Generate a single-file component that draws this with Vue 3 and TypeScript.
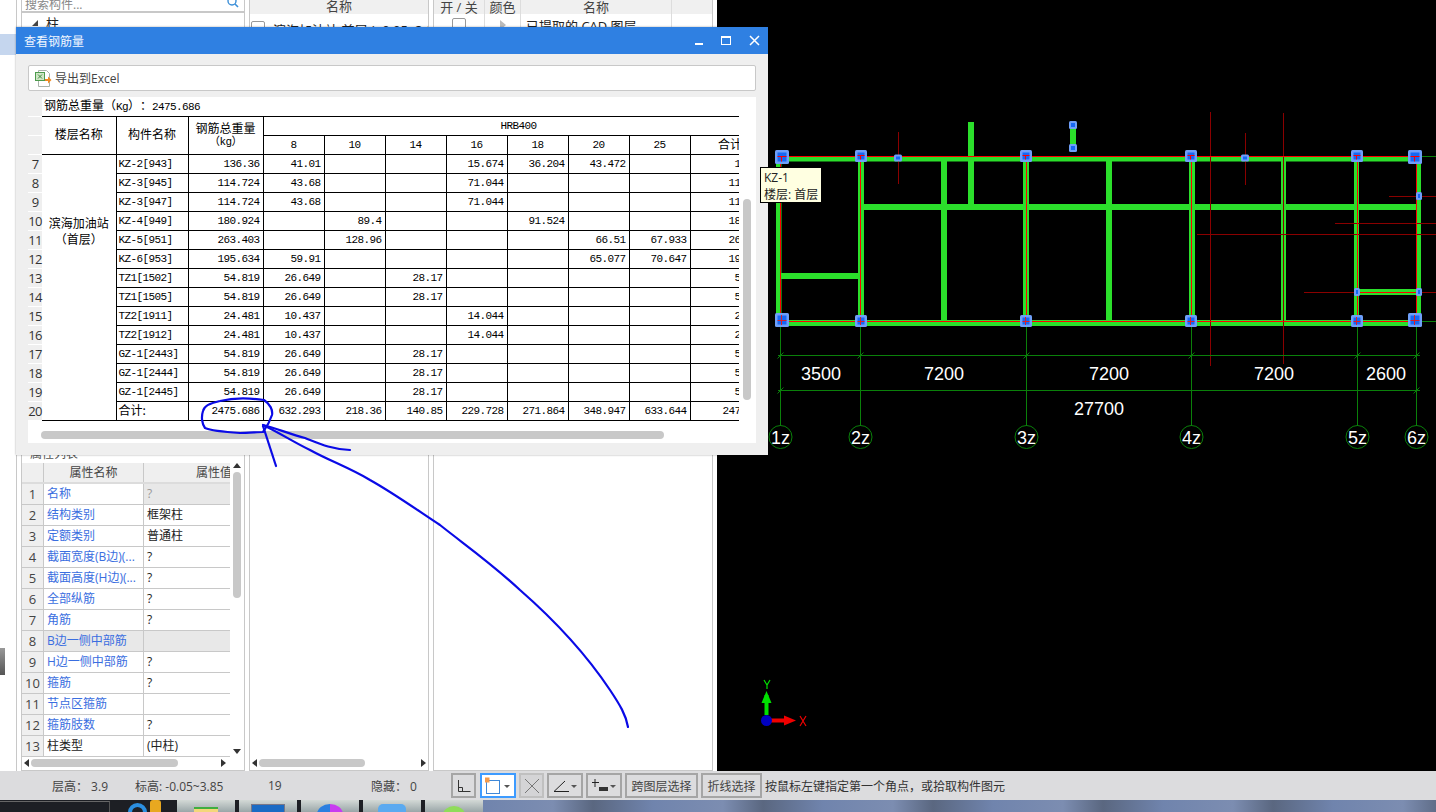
<script setup lang="ts">
interface SteelRow {
  no: number;
  name: string;
  total: string;
  bars: string[];
  sum: string;
}

const diameters = ['8', '10', '14', '16', '18', '20', '25'];

const steelRows: SteelRow[] = [
  { no: 7, name: 'KZ-2[943]', total: '136.36', bars: ['41.01', '', '', '15.674', '36.204', '43.472', ''], sum: '136.36' },
  { no: 8, name: 'KZ-3[945]', total: '114.724', bars: ['43.68', '', '', '71.044', '', '', ''], sum: '114.724' },
  { no: 9, name: 'KZ-3[947]', total: '114.724', bars: ['43.68', '', '', '71.044', '', '', ''], sum: '114.724' },
  { no: 10, name: 'KZ-4[949]', total: '180.924', bars: ['', '89.4', '', '', '91.524', '', ''], sum: '180.924' },
  { no: 11, name: 'KZ-5[951]', total: '263.403', bars: ['', '128.96', '', '', '', '66.51', '67.933'], sum: '263.403' },
  { no: 12, name: 'KZ-6[953]', total: '195.634', bars: ['59.91', '', '', '', '', '65.077', '70.647'], sum: '195.634' },
  { no: 13, name: 'TZ1[1502]', total: '54.819', bars: ['26.649', '', '28.17', '', '', '', ''], sum: '54.819' },
  { no: 14, name: 'TZ1[1505]', total: '54.819', bars: ['26.649', '', '28.17', '', '', '', ''], sum: '54.819' },
  { no: 15, name: 'TZ2[1911]', total: '24.481', bars: ['10.437', '', '', '14.044', '', '', ''], sum: '24.481' },
  { no: 16, name: 'TZ2[1912]', total: '24.481', bars: ['10.437', '', '', '14.044', '', '', ''], sum: '24.481' },
  { no: 17, name: 'GZ-1[2443]', total: '54.819', bars: ['26.649', '', '28.17', '', '', '', ''], sum: '54.819' },
  { no: 18, name: 'GZ-1[2444]', total: '54.819', bars: ['26.649', '', '28.17', '', '', '', ''], sum: '54.819' },
  { no: 19, name: 'GZ-1[2445]', total: '54.819', bars: ['26.649', '', '28.17', '', '', '', ''], sum: '54.819' },
];
const totalBars = ['632.293', '218.36', '140.85', '229.728', '271.864', '348.947', '633.644'];

const props = [
  { name: '名称', value: '?', link: true, muted: true },
  { name: '结构类别', value: '框架柱', link: true },
  { name: '定额类别', value: '普通柱', link: true },
  { name: '截面宽度(B边)(...', value: '?', link: true },
  { name: '截面高度(H边)(...', value: '?', link: true },
  { name: '全部纵筋', value: '?', link: true },
  { name: '角筋', value: '?', link: true },
  { name: 'B边一侧中部筋', value: '', link: true, shaded: true },
  { name: 'H边一侧中部筋', value: '?', link: true },
  { name: '箍筋', value: '?', link: true },
  { name: '节点区箍筋', value: '', link: true },
  { name: '箍筋肢数', value: '?', link: true },
  { name: '柱类型', value: '(中柱)', link: false },
];

// drawing coordinates, viewBox starts at the canvas left edge
const beams = [
  [776, 157, 645, 4.5],
  [776, 320, 645, 6],
  [776, 157, 5.5, 169],
  [858, 161, 6, 160],
  [941, 161, 6, 160],
  [968, 122, 6, 82],
  [1023, 161, 6, 160],
  [1106, 161, 6, 160],
  [1189, 161, 6, 160],
  [1281, 161, 5, 160],
  [1354, 161, 5, 160],
  [1416, 161, 5, 160],
  [864, 204, 552, 6],
  [781, 273, 77, 6],
  [1359, 289, 57, 6],
  [1070, 125, 6, 23],
];

const redLines = [
  [776, 156.5, 1420, 156.5],
  [780.5, 157, 780.5, 320],
  [860.5, 157, 860.5, 320],
  [1026.5, 157, 1026.5, 320],
  [1191.5, 157, 1191.5, 320],
  [1357.5, 157, 1357.5, 320],
  [1416.5, 157, 1416.5, 320],
  [776, 321.5, 1420, 321.5],
  [1359, 292.5, 1416, 292.5],
];

const darkLines = [
  [898.5, 132, 898.5, 184],
  [1245.5, 133, 1245.5, 185],
  [1210.5, 112, 1210.5, 366],
  [1283.5, 113, 1283.5, 364],
  [1389, 196.5, 1436, 196.5],
  [1335, 223.5, 1436, 223.5],
  [1197, 234.5, 1436, 234.5],
  [1304, 292.5, 1436, 292.5],
];

const axisX = [780.5, 860.5, 1026.5, 1191.5, 1357.5, 1416.5];
const axisLabels = ['1z', '2z', '3z', '4z', '5z', '6z'];
const spans = [
  { x: 821, text: '3500' },
  { x: 944, text: '7200' },
  { x: 1109, text: '7200' },
  { x: 1274, text: '7200' },
  { x: 1386, text: '2600' },
];

const nodes = [
  [782, 157, 14], [861, 156, 12], [1026, 156, 12], [1191, 156, 12], [1357, 156, 12], [1415, 157, 14],
  [782, 320, 14], [861, 321, 12], [1026, 321, 12], [1191, 321, 12], [1357, 321, 12], [1415, 320, 14],
];
const smallNodes = [
  [898, 158, 5, 5], [1245, 158, 5, 5], [1419, 196, 3, 6], [1357, 292, 3, 6], [1419, 292, 3, 6],
  [1073, 125, 5, 6], [1073, 148, 5, 6],
];

const tiles = ['ico-folder', 'ico-screen', 'ico-ball', 'ico-pane', 'ico-green'];
</script>

<template>
  <div class="screen">
    <div class="workspace">
      <aside class="rail">
        <div class="rail-selected"></div>
        <div class="rail-thumb"></div>
      </aside>

      <section class="panel panel-props">
        <div class="search">
          <span>搜索构件...</span>
          <svg width="12" height="12" viewBox="0 0 12 12" class="search-icon">
            <circle cx="5" cy="3" r="4" fill="none" stroke="#3b8fd8" stroke-width="1.4" />
            <path d="M8 6l3 3" stroke="#3b8fd8" stroke-width="1.6" />
          </svg>
        </div>
        <div class="tree-row"><i class="tree-arrow"></i>柱</div>
        <div class="prop-title">属性列表</div>
        <div class="prop-box">
          <div class="prop-main">
            <div class="prop-grid">
              <div class="prop-row prop-head">
                <span class="pn"></span><span class="pk">属性名称</span><span class="pv">属性值</span>
              </div>
              <div v-for="(p, i) in props" :key="i" class="prop-row" :class="{ shaded: p.shaded }">
                <span class="pn">{{ i + 1 }}</span>
                <span class="pk" :class="{ link: p.link }">{{ p.name }}</span>
                <span class="pv" :class="{ muted: p.muted }">{{ p.value }}</span>
              </div>
            </div>
            <div class="vbar">
              <i class="arrow-up"></i>
              <div class="vbar-thumb"></div>
              <i class="arrow-down"></i>
            </div>
          </div>
          <div class="hbar hbar-props">
            <i class="arrow-left"></i>
            <div class="hbar-track"><div class="hbar-thumb"></div></div>
            <i class="arrow-right"></i>
          </div>
        </div>
      </section>

      <section class="panel panel-floors">
        <div class="col-head">名称</div>
        <div class="floor-row"><i class="check"></i>滨海加油站 首层 ( -0.05~3.85 )</div>
        <div class="hbar hbar-floors">
          <i class="arrow-left"></i>
          <div class="hbar-track"><div class="hbar-thumb"></div></div>
          <i class="arrow-right"></i>
        </div>
      </section>

      <section class="panel panel-layers">
        <div class="layer-head">
          <span class="lc1">开 / 关</span><span class="lc2">颜色</span><span class="lc3">名称</span>
        </div>
        <div class="layer-row">
          <span class="lc1"><i class="check"></i></span>
          <span class="lc2"><i class="tri"></i></span>
          <span class="lc3 left">已提取的 CAD 图层</span>
        </div>
      </section>

      <div class="canvas">
        <svg width="719" height="771" viewBox="717 0 719 771">
          <rect v-for="(b, i) in beams" :key="'b' + i" :x="b[0]" :y="b[1]" :width="b[2]" :height="b[3]" fill="#2bdf2b" />
          <line v-for="(l, i) in darkLines" :key="'d' + i" :x1="l[0]" :y1="l[1]" :x2="l[2]" :y2="l[3]" stroke="#8a0000" />
          <line v-for="(l, i) in redLines" :key="'r' + i" :x1="l[0]" :y1="l[1]" :x2="l[2]" :y2="l[3]" stroke="#ff0000" />

          <g stroke="#0a800a" fill="none">
            <line x1="1421" y1="156.5" x2="1436" y2="156.5" />
            <line x1="1420" y1="321.5" x2="1436" y2="321.5" />
            <line x1="778" y1="355.5" x2="1420" y2="355.5" />
            <line x1="778" y1="390.5" x2="1420" y2="390.5" />
            <template v-for="(x, i) in axisX" :key="'a' + i">
              <line :x1="x" y1="326" :x2="x" y2="426" />
              <path :d="`M${x - 3} 358.5l6 -6`" />
              <circle :cx="x" cy="437" r="11.5" />
            </template>
            <path d="M777.5 393.5l6 -6M1413.5 393.5l6 -6" />
          </g>

          <g v-for="(n, i) in nodes" :key="'n' + i">
            <rect :x="n[0] - n[2] / 2" :y="n[1] - n[2] / 2" :width="n[2]" :height="n[2]" rx="1.5" fill="#6f9ff8" />
            <rect :x="n[0] - n[2] / 2 + 2.5" :y="n[1] - n[2] / 2 + 2.5" :width="n[2] - 5" :height="n[2] - 5" fill="#1668f5" />
            <path v-if="n[1] < 200" :d="`M${n[0] - n[2] / 2 + 2.5} ${n[1] - 0.5}h${n[2] - 5}M${n[0] - 0.5} ${n[1] - 0.5}v${n[2] / 2 - 2}`" stroke="#ff0000" fill="none" />
            <path v-else :d="`M${n[0] - n[2] / 2 + 2.5} ${n[1] + 0.5}h${n[2] - 5}M${n[0] - 0.5} ${n[1] - n[2] / 2 + 2}v${n[2] - 4}`" stroke="#d8202a" fill="none" />
          </g>
          <g v-for="(n, i) in smallNodes" :key="'s' + i">
            <rect :x="n[0] - n[2] / 2 - 1.5" :y="n[1] - n[3] / 2 - 1" :width="n[2] + 3" :height="n[3] + 2" rx="1.5" fill="#6f9ff8" />
            <rect :x="n[0] - n[2] / 2 + 0.5" :y="n[1] - n[3] / 2 + 1" :width="n[2] - 1" :height="n[3] - 2" fill="#1668f5" />
          </g>

          <g class="cad-text" fill="#fff" text-anchor="middle">
            <text v-for="s in spans" :key="s.x" :x="s.x" y="380">{{ s.text }}</text>
            <text x="1099" y="415">27700</text>
            <text v-for="(t, i) in axisLabels" :key="t" :x="axisX[i]" y="444">{{ t }}</text>
          </g>

          <g>
            <rect x="764.5" y="695" width="4" height="20" fill="#00e000" />
            <path d="M766.5 691l-5 12h10z" fill="#00e000" />
            <rect x="770" y="718.5" width="18" height="4" fill="#f00000" />
            <path d="M796 720.5l-12 -5v10z" fill="#f00000" />
            <circle cx="766.5" cy="720.5" r="5.5" fill="#0000c0" />
            <path d="M764 680l3 5 3 -5M767 685v4" stroke="#00e000" stroke-width="1.2" fill="none" />
            <path d="M800 716l6 10M806 716l-6 10" stroke="#f00000" stroke-width="1.2" fill="none" />
          </g>
        </svg>
      </div>
    </div>

    <footer class="status">
      <span class="st st1">层高： 3.9</span>
      <span class="st st2">标高: -0.05~3.85</span>
      <span class="st st3">19</span>
      <span class="st st4">隐藏： 0</span>
      <div class="tools">
        <button class="tool w24">
          <svg width="16" height="16" viewBox="0 0 16 16"><path d="M2.5 2v11.5h12M2.5 9.5h4v4" fill="none" stroke="#333" /></svg>
        </button>
        <button class="tool w36 on">
          <svg width="20" height="20" viewBox="0 0 20 20">
            <rect x="1.5" y="4.5" width="13" height="13" fill="none" stroke="#3f88d8" />
            <rect x="-0.5" y="1.5" width="5" height="5" fill="#f59a4a" />
          </svg>
          <i class="caret"></i>
        </button>
        <button class="tool w25 dim">
          <svg width="16" height="16" viewBox="0 0 16 16"><path d="M1 1l14 14M15 1L1 15" stroke="#777" fill="none" /></svg>
        </button>
        <button class="tool w36">
          <svg width="18" height="16" viewBox="0 0 18 16"><path d="M1 13.5h15M1 13.5L12 3" stroke="#222" fill="none" /></svg>
          <i class="caret"></i>
        </button>
        <button class="tool w36">
          <svg width="18" height="16" viewBox="0 0 18 16"><path d="M3 1v8M0 4.5h7" stroke="#222" fill="none" /><rect x="7" y="9" width="9" height="4" fill="#333" /></svg>
          <i class="caret"></i>
        </button>
        <button class="tool w73">跨图层选择</button>
        <button class="tool w61">折线选择</button>
      </div>
      <span class="hint">按鼠标左键指定第一个角点，或拾取构件图元</span>
    </footer>

    <div class="taskbar">
      <div class="start-box"></div>
      <i class="orb"></i>
      <i class="shield"></i>
      <div v-for="t in tiles" :key="t" class="tile"><i :class="t"></i></div>
      <div class="wallpaper"></div>
    </div>

    <div class="dialog">
      <header class="dialog-title">
        <span>查看钢筋量</span>
        <div class="win-btns">
          <i class="win-min"></i>
          <i class="win-max"></i>
          <svg width="11" height="11" viewBox="0 0 11 11"><path d="M1 1l9 9M10 1l-9 9" stroke="#fff" stroke-width="1.5" /></svg>
        </div>
      </header>
      <div class="dialog-body">
        <div class="dialog-toolbar">
          <svg width="17" height="17" viewBox="0 0 17 17">
            <path d="M3.5 .5h8l3 3v13h-11z" fill="#fff" stroke="#a9b3aa" />
            <rect x=".5" y="2.5" width="9" height="8" fill="#cfe6c6" stroke="#4d9a4d" />
            <path d="M3 4.5l4 4M7 4.5l-4 4" stroke="#3d8a3d" />
            <path d="M10 9h3V6.5l3.5 3.5-3.5 3.5V11h-3z" fill="#f08a24" />
          </svg>
          <span>导出到Excel</span>
        </div>
        <div class="sheet">
          <div class="sheet-left">
            <div class="sheet-clip">
              <table class="steel">
                <colgroup>
                  <col style="width: 14px" /><col style="width: 74px" /><col style="width: 72px" /><col style="width: 75px" />
                  <col v-for="d in diameters" :key="d" style="width: 61px" />
                  <col style="width: 84px" />
                </colgroup>
                <tbody>
                  <tr>
                    <td class="rn"></td>
                    <td colspan="11" class="sheet-caption"><span class="cn">钢筋总重量（</span>Kg<span class="cn">）：</span>2475.686</td>
                  </tr>
                  <tr>
                    <td class="rn"></td>
                    <td rowspan="2" class="mid no-left"><span class="cn">楼层名称</span></td>
                    <td rowspan="2" class="mid"><span class="cn">构件名称</span></td>
                    <td rowspan="2" class="mid two-line"><span class="cn">钢筋总重量</span><br />（kg）</td>
                    <td colspan="8" class="mid">HRB400</td>
                  </tr>
                  <tr>
                    <td class="rn"></td>
                    <td v-for="d in diameters" :key="d" class="mid">{{ d }}</td>
                    <td class="mid sum-head"><span class="cn">合计</span></td>
                  </tr>
                  <tr v-for="(r, i) in steelRows" :key="r.no">
                    <td class="rn num">{{ r.no }}</td>
                    <td v-if="i === 0" :rowspan="14" class="site no-left"><span class="cn">滨海加油站<br />（首层）</span></td>
                    <td class="name">{{ r.name }}</td>
                    <td class="val">{{ r.total }}</td>
                    <td v-for="(b, j) in r.bars" :key="j" class="val">{{ b }}</td>
                    <td class="val">{{ r.sum }}</td>
                  </tr>
                  <tr>
                    <td class="rn num">20</td>
                    <td class="name"><span class="cn">合计:</span></td>
                    <td class="val">2475.686</td>
                    <td v-for="(b, j) in totalBars" :key="j" class="val">{{ b }}</td>
                    <td class="val">2475.686</td>
                  </tr>
                </tbody>
              </table>
            </div>
            <div class="sheet-hbar"></div>
          </div>
          <div class="sheet-vbar"><div class="sheet-vthumb"></div></div>
        </div>
      </div>
    </div>

    <div class="tip">
      <div>KZ-1</div>
      <div>楼层: 首层</div>
    </div>

    <svg class="ink" width="1436" height="812" viewBox="0 0 1436 812">
      <g fill="none" stroke="#0a0ae6" stroke-width="2.2" stroke-linecap="round" stroke-linejoin="round">
        <path d="M264 400C250 398 232 398 220 401C210 403 204 406 203 411C201 417 202 424 205 428C212 431 225 432 240 433C248 433 258 432 263 432C266 428 270 421 272 415C273 410 270 404 264 400Z" />
        <path d="M263 426L276 466" />
        <path d="M263 425C275 428 290 434 305 438C318 443 330 449 350 450" />
        <path d="M263 425C280 433 295 443 310 450C330 461 350 468 370 480C395 494 420 512 440 525C465 545 490 562 520 590C560 625 590 660 610 690C620 705 626 715 628 727" />
      </g>
    </svg>
  </div>
</template>

<style>
html,
body {
  margin: 0;
  overflow: hidden;
  background: #fff;
}
</style>

<style scoped>
.screen {
  position: relative;
  width: 1436px;
  height: 812px;
  overflow: hidden;
  display: flex;
  flex-direction: column;
  font-family: "Open Sans", "Noto Sans CJK SC", sans-serif;
  font-size: 12px;
  color: #222;
  background: #fff;
}

.workspace {
  height: 771px;
  display: flex;
  flex: none;
}

.rail {
  width: 16px;
  flex: none;
  border-right: 1px solid #c8c8c8;
  padding-top: 34px;
  box-sizing: content-box;
}

.rail-selected {
  height: 21px;
  background: #c5d6ee;
}

.rail-thumb {
  width: 5px;
  height: 27px;
  margin-top: 593px;
  background: linear-gradient(#999, #555);
}

.panel {
  flex: none;
  box-sizing: border-box;
  height: 771px;
  border: 1px solid #c8c8c8;
  border-top: none;
  background: #fff;
  position: relative;
}

.panel-props {
  width: 224px;
  margin-left: 4px;
  margin-right: 4px;
}

.panel-floors {
  width: 180px;
  margin-right: 4px;
  border-bottom: 1px solid #c8c8c8;
}

.panel-layers {
  width: 280px;
  margin-right: 4px;
}

.search {
  height: 11px;
  border-bottom: 2px solid #c8c8c8;
  padding-left: 3px;
  line-height: 9px;
  color: #888;
  font-size: 12px;
  overflow: hidden;
  position: relative;
}

.search-icon {
  position: absolute;
  right: 5px;
  top: -2px;
}

.tree-row {
  height: 20px;
  padding-left: 24px;
  line-height: 20px;
  font-size: 13px;
  display: flex;
  align-items: center;
}

.tree-arrow {
  width: 0;
  height: 0;
  margin-left: -14px;
  margin-right: 8px;
  border-left: 6px solid transparent;
  border-bottom: 6px solid #444;
}

.prop-title {
  position: absolute;
  left: 8px;
  top: 445px;
  height: 18px;
  line-height: 18px;
  color: #555;
}

.prop-box {
  position: absolute;
  left: 0;
  right: 0;
  top: 463px;
  bottom: 0;
}

.prop-main {
  display: flex;
  height: 294px;
}

.prop-grid {
  width: 208px;
  flex: none;
  overflow: hidden;
}

.prop-row {
  display: flex;
  height: 21px;
  box-sizing: border-box;
  border-bottom: 1px solid #c8c8c8;
  line-height: 20px;
}

.prop-head {
  background: #efefef;
  border-bottom: 2px solid #dcdcdc;
  color: #444;
}

.prop-row span {
  display: block;
  box-sizing: border-box;
  white-space: nowrap;
  overflow: hidden;
}

.pn {
  width: 22px;
  flex: none;
  text-align: center;
  background: #efefef;
  border-right: 1px solid #c8c8c8;
  color: #444;
  font-size: 13px;
}

.pk {
  width: 100px;
  flex: none;
  padding-left: 3px;
  border-right: 1px solid #c8c8c8;
}

.pv {
  flex: 1;
  padding-left: 3px;
}

.prop-head .pk {
  text-align: center;
  padding-left: 0;
}

.prop-head .pv {
  padding-left: 52px;
}

.link {
  color: #3a6ee0;
}

.muted {
  color: #999;
  background: #e8e8e8;
}

.shaded .pk,
.shaded .pv {
  background: #e8e8e8;
}

.vbar {
  flex: 1;
  position: relative;
}

.vbar-thumb {
  position: absolute;
  left: 3px;
  top: 9px;
  width: 8px;
  height: 126px;
  border-radius: 4px;
  background: #c8c8c8;
}

.arrow-up,
.arrow-down,
.arrow-left,
.arrow-right {
  position: absolute;
  width: 0;
  height: 0;
}

.arrow-up {
  left: 3px;
  top: 0;
  border-left: 4px solid transparent;
  border-right: 4px solid transparent;
  border-bottom: 5px solid #333;
}

.arrow-down {
  left: 3px;
  bottom: 3px;
  border-left: 4px solid transparent;
  border-right: 4px solid transparent;
  border-top: 5px solid #333;
}

.hbar {
  position: absolute;
  left: 0;
  right: 0;
  height: 14px;
}

.hbar-props {
  top: 293px;
  right: 16px;
}

.hbar-floors {
  bottom: 0;
}

.hbar-track {
  position: absolute;
  left: 9px;
  right: 9px;
  top: 3px;
  height: 8px;
}

.hbar-thumb {
  height: 8px;
  border-radius: 4px;
  background: #c8c8c8;
}

.hbar-props .hbar-thumb {
  width: 147px;
}

.hbar-floors .hbar-thumb {
  width: 106px;
}

.arrow-left {
  left: 2px;
  top: 3px;
  border-top: 4px solid transparent;
  border-bottom: 4px solid transparent;
  border-right: 5px solid #333;
}

.arrow-right {
  right: 2px;
  top: 3px;
  border-top: 4px solid transparent;
  border-bottom: 4px solid transparent;
  border-left: 5px solid #333;
}

.col-head {
  height: 14px;
  line-height: 12px;
  text-align: center;
  background: #f0f0f0;
  font-size: 13px;
  color: #444;
}

.floor-row {
  height: 30px;
  display: flex;
  align-items: center;
  padding-left: 1px;
  font-size: 13px;
  white-space: nowrap;
  overflow: hidden;
}

.floor-row .check {
  margin-right: 8px;
  margin-top: -1px;
}

.check {
  display: block;
  flex: none;
  width: 12px;
  height: 13px;
  border: 1px solid #999;
  border-radius: 2px;
  background: #fff;
}

.layer-head,
.layer-row {
  display: flex;
}

.layer-head {
  height: 14px;
  line-height: 10px;
  background: #f0f0f0;
  color: #444;
  font-size: 13px;
}

.layer-row {
  height: 22px;
  align-items: center;
  font-size: 13px;
}

.layer-head span,
.layer-row span {
  display: flex;
  justify-content: center;
  align-items: center;
  height: 100%;
  box-sizing: border-box;
  border-right: 1px solid #ddd;
  white-space: nowrap;
}

.lc1 {
  width: 51px;
}

.lc2 {
  width: 36px;
}

.lc3 {
  width: 151px;
}

.layer-row .left {
  justify-content: flex-start;
  padding-left: 5px;
}

.tri {
  width: 0;
  height: 0;
  border-top: 5px solid transparent;
  border-bottom: 5px solid transparent;
  border-left: 6px solid #bbb;
}

.canvas {
  width: 719px;
  flex: none;
  background: #000;
  line-height: 0;
}

.cad-text {
  font-family: "Liberation Sans", sans-serif;
  font-size: 18px;
}

.status {
  height: 29px;
  flex: none;
  display: flex;
  align-items: center;
  padding-left: 52px;
  background: #dcdcde;
  color: #444;
}

.st {
  flex: none;
  white-space: nowrap;
}

.st1 {
  width: 83px;
}

.st2 {
  width: 133px;
}

.st3 {
  width: 103px;
}

.st4 {
  width: 80px;
}

.tools {
  display: flex;
  gap: 3px;
  flex: none;
}

.tool {
  height: 25px;
  padding: 0;
  box-sizing: border-box;
  border: 2px solid #a5a5a5;
  background: #dcdcde;
  display: flex;
  align-items: center;
  justify-content: center;
  font: inherit;
  color: #444;
  position: relative;
}

.w24 {
  width: 25px;
  margin-right: 1px;
}

.w25 {
  width: 25px;
}

.w36 {
  width: 36px;
  justify-content: flex-start;
  padding-left: 4px;
}

.w73 {
  width: 73px;
}

.w61 {
  width: 61px;
}

.tool.on {
  border-color: #3d9bff;
  background: #fff;
  padding-left: 3px;
}

.tool.dim {
  border-color: #c0c0c0;
  background: #d4d4d6;
}

.caret {
  position: absolute;
  right: 4px;
  top: 10px;
  width: 0;
  height: 0;
  border-left: 3px solid transparent;
  border-right: 3px solid transparent;
  border-top: 3px solid #555;
}

.hint {
  margin-left: 3px;
  color: #333;
  white-space: nowrap;
}

.taskbar {
  height: 12px;
  flex: none;
  display: flex;
  gap: 0;
  overflow: hidden;
  background: #1d1f24;
}

.start-box {
  width: 110px;
  height: 11px;
  margin-top: 1px;
  border-top: 1px solid #666;
  border-right: 1px solid #555;
  box-sizing: border-box;
  flex: none;
}

.orb {
  width: 19px;
  height: 19px;
  flex: none;
  margin-left: 18px;
  margin-top: 3px;
  border-radius: 50%;
  border: 4px solid #2b8fe0;
  box-sizing: border-box;
}

.shield {
  width: 11px;
  height: 12px;
  flex: none;
  margin-left: 3px;
  margin-right: 16px;
  border-radius: 3px 3px 0 0;
  background: #e8a820;
}

.tile {
  width: 58px;
  flex: none;
  margin-right: 4px;
  display: flex;
  justify-content: center;
  background: linear-gradient(#d3d9d6, #9aa6a8);
  overflow: hidden;
}

.tile i {
  display: block;
  margin-top: 7px;
}

.ico-folder {
  width: 24px;
  height: 8px;
  background: #f4d77a;
  border-top: 2px solid #3fae3f;
}

.ico-screen {
  width: 32px;
  height: 8px;
  margin-top: 4px !important;
  background: #1a6bc4;
  border: 1px solid #778;
}

.ico-ball {
  width: 26px;
  height: 20px;
  margin-top: 4px !important;
  border-radius: 50%;
  background: linear-gradient(90deg, #2a7fe0 50%, #c83cf0 50%);
}

.ico-pane {
  width: 28px;
  height: 12px;
  margin-top: 4px !important;
  border-radius: 5px 5px 0 0;
  background: #5aaaf0;
}

.ico-green {
  width: 22px;
  height: 18px;
  margin-top: 6px !important;
  border-radius: 50%;
  background: #8fdc5a;
}

.wallpaper {
  flex: 1;
  margin-left: -4px;
  background: repeating-linear-gradient(90deg, #7084ad 0, #7c8db1 70px, #5a6780 110px, #7084ad 170px);
}

.dialog {
  position: absolute;
  left: 16px;
  top: 27px;
  width: 752px;
  height: 428px;
  display: flex;
  flex-direction: column;
  background: #efefef;
  box-shadow: 0 0 2px rgba(0, 0, 0, 0.35);
}

.dialog-title {
  height: 27px;
  flex: none;
  display: flex;
  align-items: center;
  justify-content: space-between;
  padding: 0 8px;
  background: #2f80e2;
  color: #f2f7ff;
}

.win-btns {
  display: flex;
  align-items: center;
  gap: 18px;
}

.win-min {
  width: 8px;
  height: 2px;
  margin-top: 7px;
  background: #fff;
}

.win-max {
  width: 8px;
  height: 6px;
  border: 1px solid #fff;
  border-top-width: 2px;
}

.dialog-body {
  flex: 1;
  padding: 11px 12px 0;
}

.dialog-toolbar {
  height: 26px;
  box-sizing: border-box;
  border: 1px solid #c8c8c8;
  border-radius: 2px;
  background: #fff;
  display: flex;
  align-items: center;
  gap: 3px;
  padding-left: 6px;
  color: #444;
}

.sheet {
  display: flex;
  margin-top: 6px;
  height: 346px;
  background: #fff;
}

.sheet-left {
  width: 711px;
  flex: none;
}

.sheet-clip {
  width: 711px;
  overflow: hidden;
}

.steel {
  width: 746px;
  table-layout: fixed;
  border-collapse: collapse;
  font-family: "Liberation Mono", "Noto Sans CJK SC", monospace;
  font-size: 11px;
  letter-spacing: -0.6px;
  color: #000;
}

.steel td {
  height: 19px;
  box-sizing: border-box;
  padding: 0;
  border: 1px solid #000;
  white-space: nowrap;
  overflow: hidden;
  line-height: 12px;
}

.cn {
  font-family: "Noto Sans CJK SC", sans-serif;
  font-size: 12px;
  letter-spacing: 0;
  text-spacing-trim: space-all;
}

.steel .rn {
  border: none;
  border-bottom: 1px solid #fff;
  background: #efefef;
  text-align: center;
  overflow: visible;
}

.steel .num {
  font-family: "Open Sans", sans-serif;
  font-size: 13px;
  color: #333;
  letter-spacing: -0.8px;
}

.steel .sheet-caption {
  border-top: none;
  border-left: none;
  border-right: none;
  padding-left: 2px;
}

.steel .mid {
  text-align: center;
  vertical-align: middle;
}

.steel .sum-head {
  padding-right: 4px;
}

.steel .no-left {
  border-left: none;
}

.two-line {
  line-height: 14px;
}

.steel .site {
  vertical-align: top;
  text-align: center;
  padding-top: 60px;
}

.steel .site .cn {
  line-height: 15px;
}

.steel .name {
  padding-left: 2px;
}

.steel .val {
  text-align: right;
  padding-right: 3px;
}

.sheet-hbar {
  width: 623px;
  height: 8px;
  margin: 10px 0 0 13px;
  border-radius: 4px;
  background: #c8c8c8;
}

.sheet-vbar {
  flex: 1;
  padding: 102px 0 0 4px;
}

.sheet-vthumb {
  width: 8px;
  height: 201px;
  border-radius: 4px;
  background: #c8c8c8;
}

.tip {
  position: absolute;
  left: 760px;
  top: 167px;
  width: 62px;
  height: 36px;
  box-sizing: border-box;
  border: 1px solid #000;
  background: #ffffe1;
  padding: 1px 0 0 3px;
  line-height: 17px;
  color: #222;
  white-space: nowrap;
}

.ink {
  position: absolute;
  left: 0;
  top: 0;
  pointer-events: none;
}
</style>
